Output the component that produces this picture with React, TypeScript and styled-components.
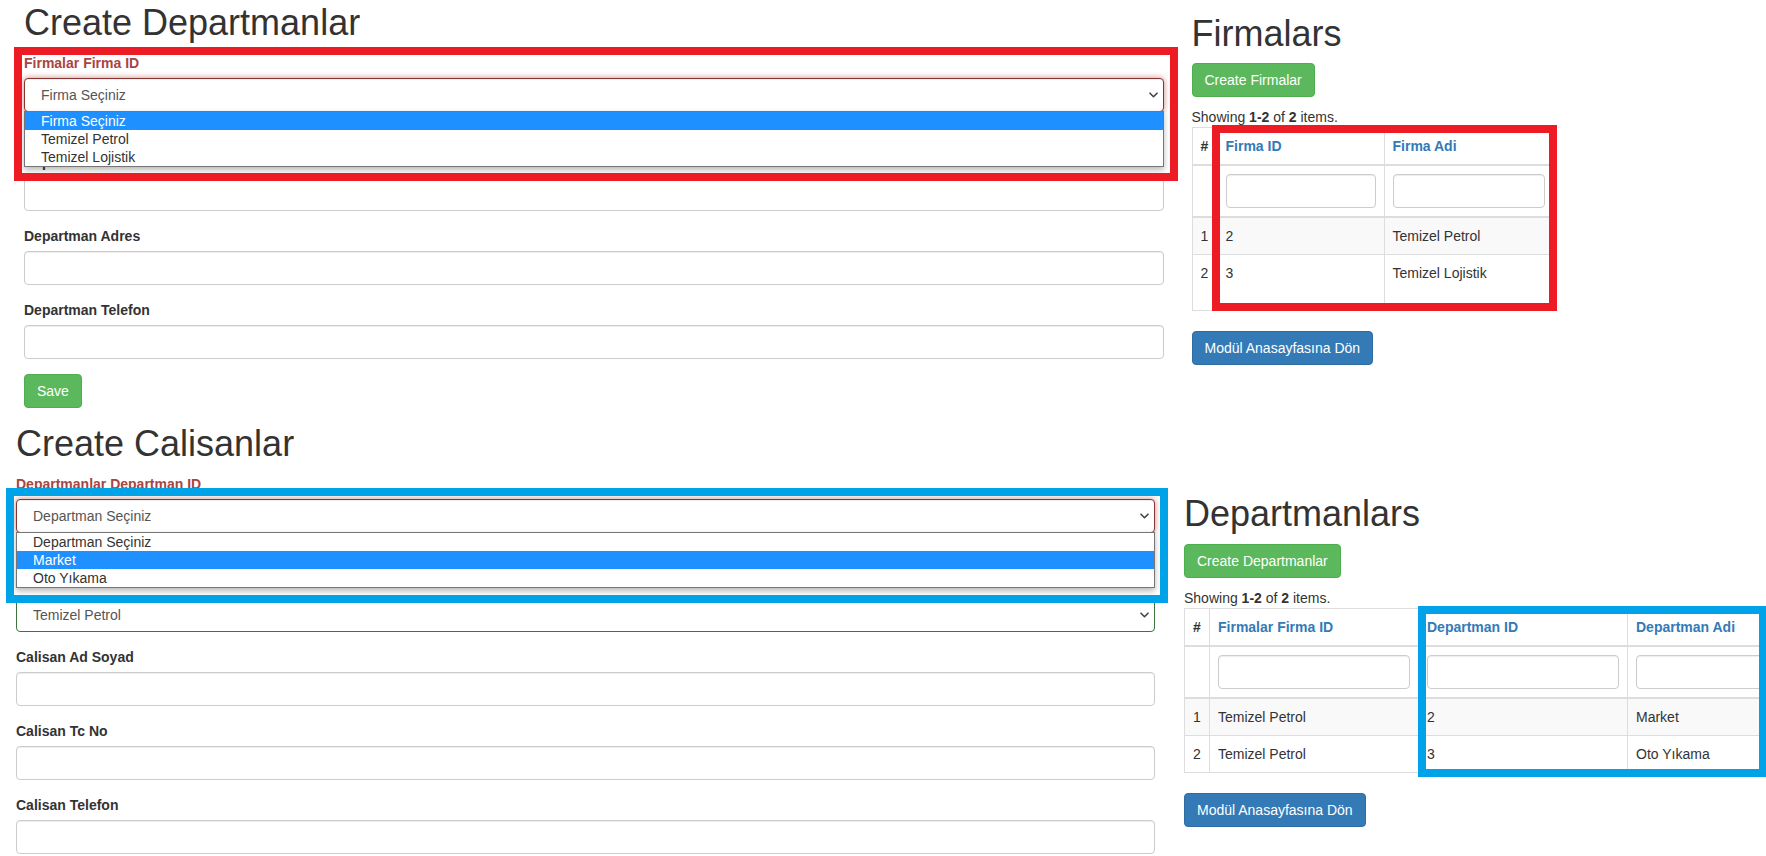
import React from "react";
import styled, { createGlobalStyle } from "styled-components";

type FieldState = "default" | "error" | "success";

const labelColor: Record<FieldState, string> = {
  default: "#333333",
  error: "#a94442",
  success: "#3c763d",
};

const GlobalStyle = createGlobalStyle`
  *, *::before, *::after { box-sizing: border-box; }
  html, body {
    margin: 0;
    padding: 0;
    background: #ffffff;
    overflow: hidden;
  }
  body {
    font-family: "Liberation Sans", Arial, Helvetica, sans-serif;
    font-size: 14px;
    line-height: 20px;
    color: #333333;
  }
`;

const Page = styled.div`
  position: relative;
  width: 1766px;
  height: 856px;
  overflow: hidden;
  background: #ffffff;
`;

const Section = styled.section<{ $padTop: number; $padLeft: number; $gap: number }>`
  display: flex;
  align-items: flex-start;
  padding: ${(p) => p.$padTop}px 0 0 ${(p) => p.$padLeft}px;
  gap: ${(p) => p.$gap}px;
`;

const FormColumn = styled.div<{ $width: number }>`
  flex: 0 0 ${(p) => p.$width}px;
  width: ${(p) => p.$width}px;
`;

const ListColumn = styled.div<{ $offset: number; $width: number }>`
  flex: 0 0 ${(p) => p.$width}px;
  width: ${(p) => p.$width}px;
  padding-top: ${(p) => p.$offset}px;
`;

const Title = styled.h1`
  margin: 0 0 10px;
  font-size: 36px;
  line-height: 1.1;
  font-weight: 400;
  color: #333333;
`;

const FormGroup = styled.div`
  margin-bottom: 15px;
`;

const Label = styled.label<{ $state: FieldState }>`
  display: block;
  margin-bottom: 5px;
  font-weight: 700;
  color: ${(p) => labelColor[p.$state]};
`;

const HelpBlock = styled.div`
  margin-top: 5px;
  height: 20px;
`;

const TextInput = styled.input`
  display: block;
  width: 100%;
  height: 34px;
  padding: 6px 12px;
  font: inherit;
  color: #555555;
  background: #ffffff;
  border: 1px solid #cccccc;
  border-radius: 4px;
  box-shadow: inset 0 1px 1px rgba(0, 0, 0, 0.075);
  outline: none;
`;

const SelectWrap = styled.div`
  position: relative;
`;

const SelectBox = styled.div<{ $state: FieldState; $open?: boolean }>`
  display: flex;
  align-items: center;
  justify-content: space-between;
  height: 34px;
  padding: 6px 5px 6px 16px;
  background: #ffffff;
  color: #555555;
  border: 1px solid
    ${(p) => (p.$state === "error" ? (p.$open ? "#843534" : "#a94442") : p.$state === "success" ? "#3c763d" : "#cccccc")};
  border-radius: 4px;
  box-shadow: inset 0 1px 1px rgba(0, 0, 0, 0.075)
    ${(p) => (p.$open ? ", 0 0 6px #ce8483" : "")};
`;

const OptionList = styled.ul`
  position: absolute;
  z-index: 3;
  top: calc(100% - 1px);
  left: 0;
  right: 0;
  margin: 0;
  padding: 0;
  list-style: none;
  background: #ffffff;
  border: 1px solid #767676;
  box-shadow: 0 3px 6px rgba(0, 0, 0, 0.28);
`;

const OptionItem = styled.li<{ $active?: boolean }>`
  height: 18px;
  line-height: 18px;
  padding-left: 16px;
  color: ${(p) => (p.$active ? "#ffffff" : "#333333")};
  background: ${(p) => (p.$active ? "#1e90ff" : "transparent")};
  white-space: nowrap;
`;

const ButtonBar = styled.div<{ $gapBelow?: number }>`
  display: flex;
  margin-bottom: ${(p) => p.$gapBelow ?? 0}px;
`;

const Button = styled.a<{ $variant: "success" | "primary" }>`
  display: inline-block;
  padding: 6px 12px;
  font-size: 14px;
  line-height: 20px;
  color: #ffffff;
  text-decoration: none;
  white-space: nowrap;
  border-radius: 4px;
  border: 1px solid ${(p) => (p.$variant === "success" ? "#4cae4c" : "#2e6da4")};
  background: ${(p) => (p.$variant === "success" ? "#5cb85c" : "#337ab7")};
`;

const Summary = styled.div`
  line-height: 20px;
`;

const Grid = styled.table<{ $width: number }>`
  width: ${(p) => p.$width}px;
  table-layout: fixed;
  border-collapse: collapse;
  border: 1px solid #dddddd;
  margin-bottom: 20px;
`;

const HeadCell = styled.th`
  padding: 8px;
  text-align: left;
  vertical-align: bottom;
  border: 1px solid #dddddd;
  border-bottom-width: 2px;
  font-weight: 700;
  line-height: 20px;
  color: #333333;
  white-space: nowrap;
  overflow: hidden;
`;

const SortLink = styled.a`
  color: #337ab7;
  text-decoration: none;
`;

const FilterCell = styled.td`
  padding: 8px;
  vertical-align: top;
  border: 1px solid #dddddd;
  border-bottom-width: 2px;
`;

const BodyRow = styled.tr<{ $striped?: boolean }>`
  background: ${(p) => (p.$striped ? "#f9f9f9" : "#ffffff")};
`;

const BodyCell = styled.td<{ $tall?: boolean }>`
  padding: 8px 8px ${(p) => (p.$tall ? 27 : 8)}px;
  vertical-align: top;
  line-height: 20px;
  border: 1px solid #dddddd;
  color: #333333;
  white-space: nowrap;
`;

const Annotation = styled.div<{ $color: string; $x: number; $y: number; $w: number; $h: number }>`
  position: absolute;
  z-index: 10;
  left: ${(p) => p.$x}px;
  top: ${(p) => p.$y}px;
  width: ${(p) => p.$w}px;
  height: ${(p) => p.$h}px;
  border: 8px solid ${(p) => p.$color};
  pointer-events: none;
`;

const Chevron = () => (
  <svg width="9" height="6" viewBox="0 0 9 6" aria-hidden="true">
    <path d="M1 1.2 L4.5 4.7 L8 1.2" fill="none" stroke="#444" strokeWidth="1.6" strokeLinecap="round" strokeLinejoin="round" />
  </svg>
);

type Field =
  | { kind: "text"; label: string }
  | {
      kind: "select";
      label: string;
      state: FieldState;
      value: string;
      open?: boolean;
      options?: string[];
      active?: number;
      helpLine?: boolean;
    };

const FormField: React.FC<{ field: Field }> = ({ field }) => {
  if (field.kind === "text") {
    return (
      <FormGroup>
        <Label $state="default">{field.label}</Label>
        <TextInput type="text" readOnly />
      </FormGroup>
    );
  }
  return (
    <FormGroup>
      <Label $state={field.state}>{field.label}</Label>
      <SelectWrap>
        <SelectBox $state={field.state} $open={field.open}>
          <span>{field.value}</span>
          <Chevron />
        </SelectBox>
        {field.open && field.options && (
          <OptionList>
            {field.options.map((o, i) => (
              <OptionItem key={o} $active={i === field.active}>
                {o}
              </OptionItem>
            ))}
          </OptionList>
        )}
      </SelectWrap>
      {field.helpLine && <HelpBlock />}
    </FormGroup>
  );
};

type GridData = {
  title: string;
  create: string;
  tableWidth: number;
  columns: { label: string; width: number }[];
  rows: string[][];
  tallLast?: boolean;
};

const DataGrid: React.FC<{ data: GridData }> = ({ data }) => (
  <>
    <Title>{data.title}</Title>
    <ButtonBar $gapBelow={10}>
      <Button $variant="success">{data.create}</Button>
    </ButtonBar>
    <Summary>
      Showing <b>1-2</b> of <b>2</b> items.
    </Summary>
    <Grid $width={data.tableWidth}>
      <colgroup>
        <col style={{ width: 25 }} />
        {data.columns.map((c) => (
          <col key={c.label} style={{ width: c.width }} />
        ))}
      </colgroup>
      <thead>
        <tr>
          <HeadCell>#</HeadCell>
          {data.columns.map((c) => (
            <HeadCell key={c.label}>
              <SortLink>{c.label}</SortLink>
            </HeadCell>
          ))}
        </tr>
        <tr>
          <FilterCell>&nbsp;</FilterCell>
          {data.columns.map((c) => (
            <FilterCell key={c.label}>
              <TextInput type="text" readOnly />
            </FilterCell>
          ))}
        </tr>
      </thead>
      <tbody>
        {data.rows.map((r, i) => {
          const tall = data.tallLast && i === data.rows.length - 1;
          return (
            <BodyRow key={i} $striped={i % 2 === 0}>
              <BodyCell $tall={tall}>{i + 1}</BodyCell>
              {r.map((v, j) => (
                <BodyCell key={j} $tall={tall}>
                  {v}
                </BodyCell>
              ))}
            </BodyRow>
          );
        })}
      </tbody>
    </Grid>
    <ButtonBar>
      <Button $variant="primary">Modül Anasayfasına Dön</Button>
    </ButtonBar>
  </>
);

const departmanFields: Field[] = [
  {
    kind: "select",
    label: "Firmalar Firma ID",
    state: "error",
    value: "Firma Seçiniz",
    open: true,
    options: ["Firma Seçiniz", "Temizel Petrol", "Temizel Lojistik"],
    active: 0,
    helpLine: true,
  },
  { kind: "text", label: "Departman Adi" },
  { kind: "text", label: "Departman Adres" },
  { kind: "text", label: "Departman Telefon" },
];

const calisanFields: Field[] = [
  {
    kind: "select",
    label: "Departmanlar Departman ID",
    state: "error",
    value: "Departman Seçiniz",
    open: true,
    options: ["Departman Seçiniz", "Market", "Oto Yıkama"],
    active: 1,
    helpLine: true,
  },
  { kind: "select", label: "Firmalar Firma ID", state: "success", value: "Temizel Petrol" },
  { kind: "text", label: "Calisan Ad Soyad" },
  { kind: "text", label: "Calisan Tc No" },
  { kind: "text", label: "Calisan Telefon" },
];

const firmalarGrid: GridData = {
  title: "Firmalars",
  create: "Create Firmalar",
  tableWidth: 361,
  columns: [
    { label: "Firma ID", width: 167 },
    { label: "Firma Adi", width: 169 },
  ],
  rows: [
    ["2", "Temizel Petrol"],
    ["3", "Temizel Lojistik"],
  ],
  tallLast: true,
};

const departmanlarGrid: GridData = {
  title: "Departmanlars",
  create: "Create Departmanlar",
  tableWidth: 652,
  columns: [
    { label: "Firmalar Firma ID", width: 209 },
    { label: "Departman ID", width: 209 },
    { label: "Departman Adi", width: 209 },
  ],
  rows: [
    ["Temizel Petrol", "2", "Market"],
    ["Temizel Petrol", "3", "Oto Yıkama"],
  ],
};

export default function App() {
  return (
    <>
      <GlobalStyle />
      <Page>
        <Section $padTop={3} $padLeft={24} $gap={27.5}>
          <FormColumn $width={1140}>
            <Title>Create Departmanlar</Title>
            {departmanFields.map((f) => (
              <FormField key={f.label} field={f} />
            ))}
            <ButtonBar>
              <Button $variant="success">Save</Button>
            </ButtonBar>
          </FormColumn>
          <ListColumn $offset={10.5} $width={361}>
            <DataGrid data={firmalarGrid} />
          </ListColumn>
        </Section>

        <Section $padTop={16.4} $padLeft={16} $gap={29}>
          <FormColumn $width={1139}>
            <Title>Create Calisanlar</Title>
            {calisanFields.map((f) => (
              <FormField key={f.label} field={f} />
            ))}
          </FormColumn>
          <ListColumn $offset={70.5} $width={652}>
            <DataGrid data={departmanlarGrid} />
          </ListColumn>
        </Section>

        <Annotation $color="#ed1c24" $x={14} $y={47} $w={1164} $h={134} />
        <Annotation $color="#ed1c24" $x={1212} $y={125} $w={345} $h={186} />
        <Annotation $color="#00a2e8" $x={6} $y={488} $w={1162} $h={115} />
        <Annotation $color="#00a2e8" $x={1418} $y={606} $w={349} $h={171} />
      </Page>
    </>
  );
}
